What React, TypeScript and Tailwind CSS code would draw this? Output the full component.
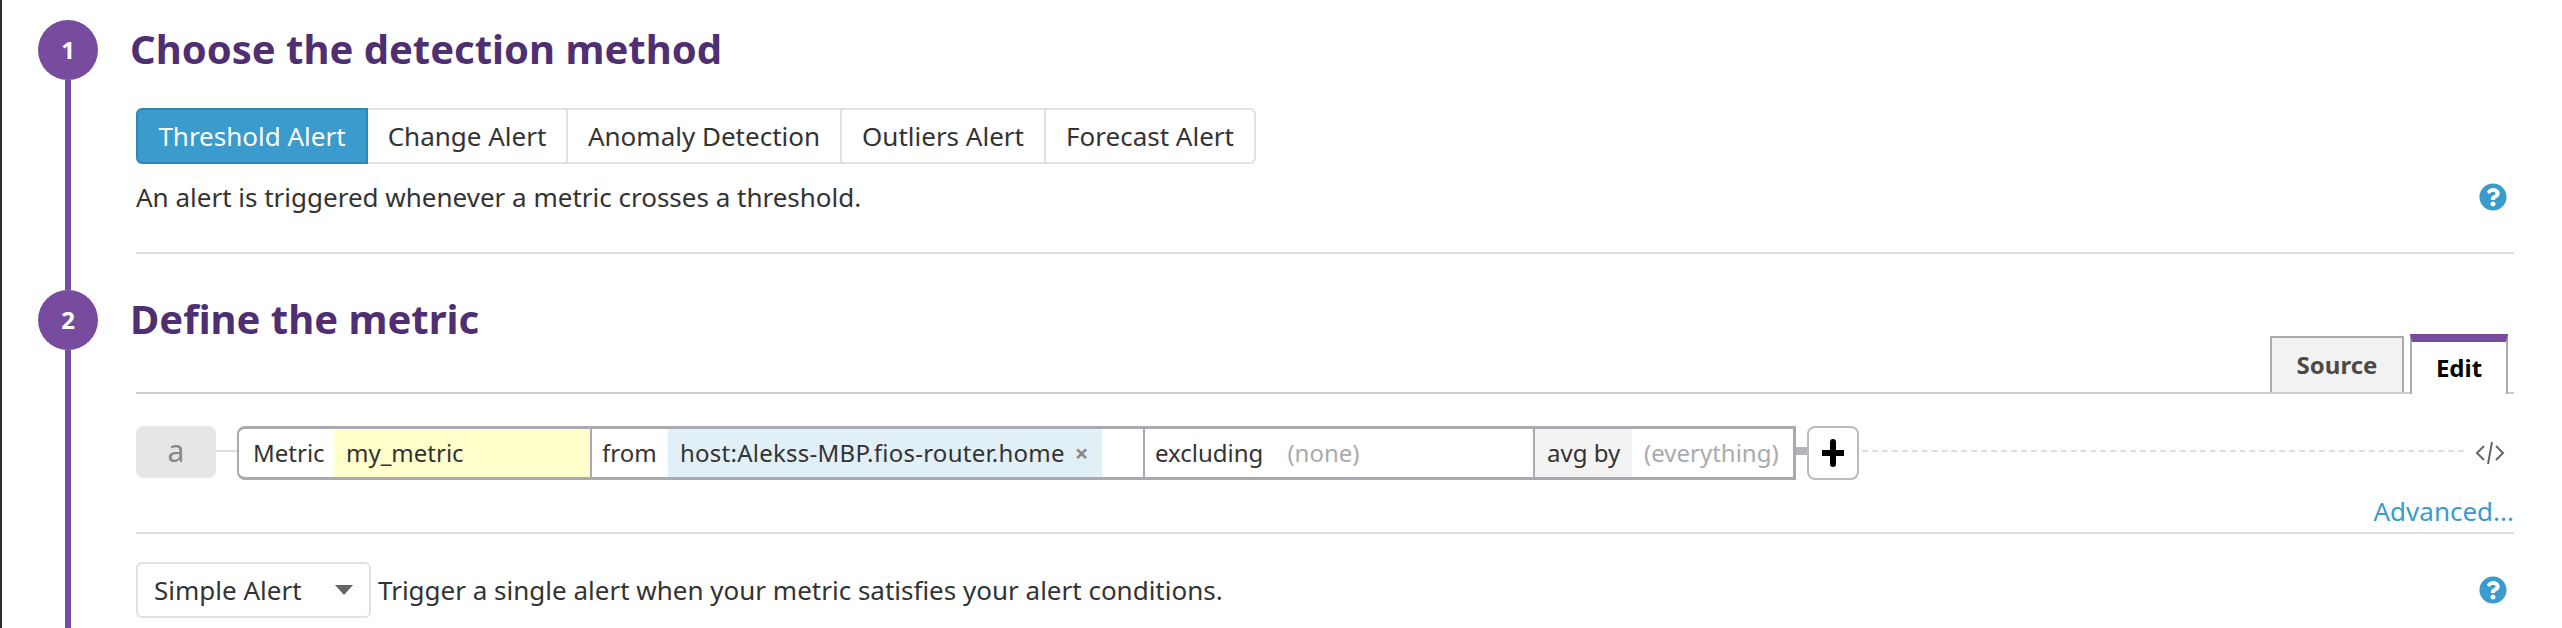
import React from "react"
import { FaQuestionCircle } from "react-icons/fa"

const methods = ["Change Alert", "Anomaly Detection", "Outliers Alert", "Forecast Alert"]
const methodWidths = ["w-[200px]", "w-[274px]", "w-[204px]", "w-[210px]"]

const StepTitle = ({ children }: { children: React.ReactNode }) => (
  <h2 className="h-[60px] -translate-x-[2px] -translate-y-px text-[40px] leading-[60px] font-bold text-[#4f2f72] whitespace-nowrap">
    {children}
  </h2>
)

const Rail = ({ n }: { n: number }) => (
  <div className="flex w-[60px] shrink-0 flex-col items-center">
    <div className="flex h-[60px] w-[60px] shrink-0 items-center justify-center rounded-full bg-[#774c9f] text-[24px] font-bold text-white">
      {n}
    </div>
    <div className="w-[6px] flex-1 bg-[#774c9f]" />
  </div>
)

const HelpIcon = () => <FaQuestionCircle className="text-[28px] text-[#3a9bcc]" />

const App: React.FC = () => {
  return (
    <div className="flex h-[628px] w-[2562px] flex-col overflow-hidden border-l-2 border-[#2d2838] bg-white pl-9 pr-12 font-['Noto_Sans',sans-serif] text-[26px] text-[#333]">
      {/* step 1 */}
      <section className="flex h-[254px] shrink-0 gap-[34px]">
        <div className="mt-5 flex">
          <Rail n={1} />
        </div>
        <div className="min-w-0 flex-1 pt-5">
          <StepTitle>Choose the detection method</StepTitle>
          <div className="ml-1 mt-7">
            <div className="flex h-14">
              <div className="flex w-[232px] items-center justify-center rounded-l-md border-2 border-[#2f86b3] bg-[#3a9bcc] text-white">
                Threshold Alert
              </div>
              {methods.map((m, i) => (
                <div
                  key={m}
                  className={`flex items-center justify-center border-y-2 border-r-2 border-[#e0e0e6] ${methodWidths[i]} ${
                    i === 3 ? "rounded-r-md" : ""
                  }`}>
                  {m}
                </div>
              ))}
            </div>
            <div className="mt-[15px] flex h-9 items-center justify-between pr-[7px]">
              <p className="leading-9">An alert is triggered whenever a metric crosses a threshold.</p>
              <HelpIcon />
            </div>
            <div className="mt-[37px] h-[2px] bg-[#ddd]" />
          </div>
        </div>
      </section>

      {/* step 2 */}
      <section className="flex min-h-0 flex-1 gap-[34px]">
        <div className="flex w-[60px] shrink-0 flex-col items-center">
          <div className="h-9 w-[6px] shrink-0 bg-[#774c9f]" />
          <div className="flex flex-1">
            <Rail n={2} />
          </div>
        </div>
        <div className="min-w-0 flex-1 pt-9">
          <StepTitle>Define the metric</StepTitle>
          <div className="ml-1">
            <div className="-mt-4 flex h-[60px] items-end justify-end border-b-2 border-[#ccc] pr-[6px]">
              <div className="mr-[6px] flex h-[56px] w-[134px] items-center justify-center border-2 border-b-0 border-[#aaa] bg-[#f2f2f2] text-[24px] font-bold text-[#4a4a4a]">
                Source
              </div>
              <div className="-mb-[2px] flex h-[60px] w-[98px] items-center justify-center border-x-2 border-t-8 border-x-[#aaa] border-t-[#774c9f] bg-white text-[24px] font-bold text-black">
                Edit
              </div>
            </div>

            <div className="mt-8 flex h-[54px] items-center">
              <div className="flex h-[52px] w-20 -translate-y-px items-center justify-center rounded-lg bg-[#e6e6e6] pb-1 text-[30px] text-[#888]">
                a
              </div>
              <div className="h-[2px] w-[21px] -translate-y-[2px] bg-[#ddd]" />
              <div className="flex h-[54px] w-[1559px] overflow-hidden rounded-l-lg border-[3px] border-l-2 border-[#aaa8b0] text-[24px]">
                <div className="flex w-[95px] items-center pl-[14px]">Metric</div>
                <div className="flex w-[258px] items-center border-r-2 border-[#aaa8b0] bg-[#ffffcc] pl-3">my_metric</div>
                <div className="flex w-[76px] items-center pl-[10px]">from</div>
                <div className="flex w-[434px] items-center whitespace-nowrap bg-[#e1eff7] pl-3 tracking-[0.25px]">
                  host:Alekss-MBP.fios-router.home
                  <span className="ml-[10px] text-[24px] font-bold text-[#888]">×</span>
                </div>
                <div className="w-[43px] border-r-2 border-[#aaa8b0]" />
                <div className="flex w-[390px] items-center border-r-2 border-[#aaa8b0] pl-[10px]">
                  excluding
                  <span className="ml-[24px] text-[#aaa]">(none)</span>
                </div>
                <div className="flex w-[97px] items-center bg-[#f3f3f3] pl-3">avg by</div>
                <div className="flex flex-1 items-center pl-3 text-[#aaa] whitespace-nowrap">(everything)</div>
              </div>
              <div className="h-2 w-[11px] -translate-y-[2px] bg-[#b5b3b9]" />
              <div className="flex h-[54px] w-[52px] items-center justify-center rounded-lg border-2 border-[#bbb]">
                <svg width="22" height="40" viewBox="0 0 22 40">
                  <path d="M11 9v22M1 20h20" stroke="#000" strokeWidth="6" strokeLinecap="round" />
                </svg>
              </div>
              <div className="mx-[3px] flex-1 -translate-y-[2px] border-t-2 border-dashed border-[#ddd]" />
              <svg width="30" height="24" viewBox="0 0 30 24" className="ml-2 mr-[9px] shrink-0" fill="none" stroke="#666" strokeWidth="2">
                <path d="M9 5L2 12l7 7M21 5l7 7-7 7M17 1l-4 22" />
              </svg>
            </div>

            <div className="flex h-[54px] items-center justify-end border-b-2 border-[#ddd] pt-[10px]">
              <a className="text-[#3a9bcc]">Advanced...</a>
            </div>

            <div className="mt-7 flex h-14 items-center">
              <div className="flex h-14 w-[235px] items-center justify-between rounded-md border-2 border-[#e0e0e6] pl-4 pr-4">
                <span>Simple Alert</span>
                <span className="h-0 w-0 border-x-[9px] border-t-[10px] border-x-transparent border-t-[#666]" />
              </div>
              <p className="ml-[7px] flex-1">Trigger a single alert when your metric satisfies your alert conditions.</p>
              <div className="mr-[7px] flex">
                <HelpIcon />
              </div>
            </div>
          </div>
        </div>
      </section>
    </div>
  )
}

export default App
